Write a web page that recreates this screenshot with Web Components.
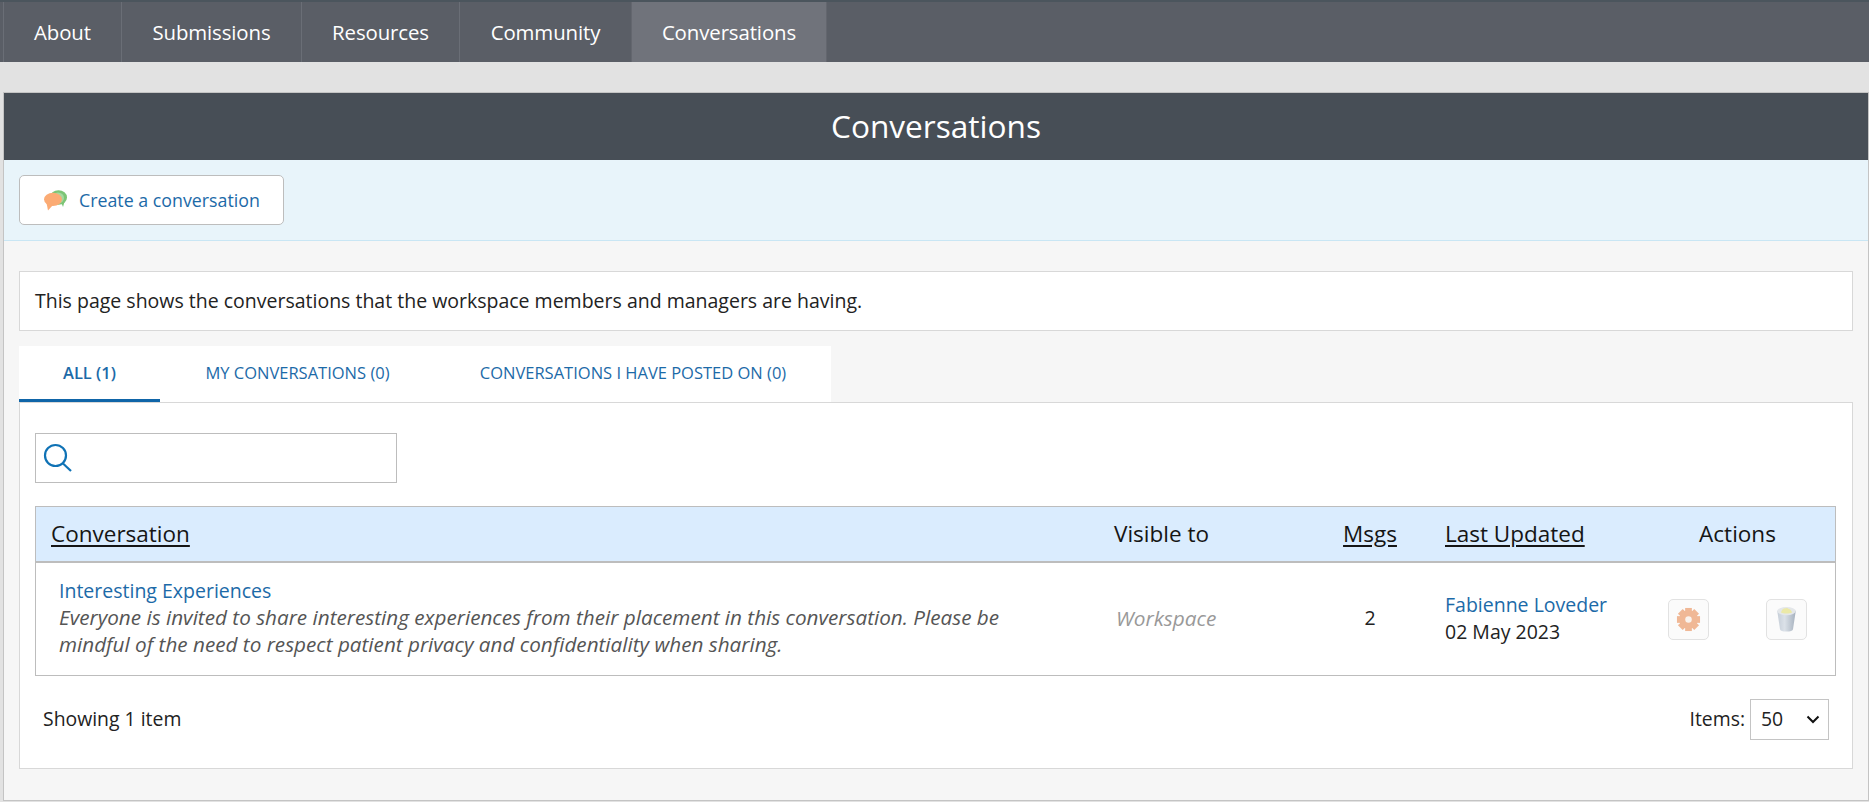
<!DOCTYPE html>
<html lang="en"><head><meta charset="utf-8"><title>Conversations</title>
<style>
html,body{margin:0;padding:0;background:#e2e2e2;font-family:"Open Sans",sans-serif;color:#222;height:802px;overflow:hidden}
</style></head><body>
<app-nav>
  <nav-item style="--w:118px">About</nav-item>
  <nav-item style="--w:180px">Submissions</nav-item>
  <nav-item style="--w:158px">Resources</nav-item>
  <nav-item style="--w:172px">Community</nav-item>
  <nav-item active style="--w:196px">Conversations</nav-item>
</app-nav>
<page-panel heading="Conversations">
  <action-bar><chat-button>Create a conversation</chat-button></action-bar>
  <panel-body>
    <intro-box>This page shows the conversations that the workspace members and managers are having.</intro-box>
    <tab-strip>
      <tab-item active style="--w:141px">ALL (1)</tab-item>
      <tab-item style="--w:275px">MY CONVERSATIONS (0)</tab-item>
      <tab-item style="--w:396px">CONVERSATIONS I HAVE POSTED ON (0)</tab-item>
    </tab-strip>
    <tab-panel>
      <search-box></search-box>
      <conversation-table></conversation-table>
      <list-footer></list-footer>
    </tab-panel>
  </panel-body>
</page-panel>
<script>
function def(name, css, html){
  customElements.define(name, class extends HTMLElement{
    constructor(){super();const r=this.attachShadow({mode:'open'});
      r.innerHTML='<style>'+css+'</style>'+(typeof html==='function'?html(this):html);}
  });
}
const BLUE='#1c6aa8';
def('app-nav',`:host{display:flex;height:60px;padding:2px 0 0 3px;background:#5a5e66;box-shadow:inset 0 2px 0 #4b555d}`,`<slot></slot>`);
def('nav-item',`:host{display:flex;align-items:center;justify-content:center;box-sizing:border-box;width:var(--w);height:60px;color:#fff;font-size:20.4px;border-left:1px solid #6a6e76;letter-spacing:-.1px}
:host([active]){background:#70737b;border-left-color:#63666e;border-right:1px solid #63666e}`,`<slot></slot>`);
def('page-panel',`:host{display:block;box-sizing:border-box;margin:30px 0 0 3px;width:1866px;height:709px;background:#f6f6f6;border:1px solid #c4c4c4}
h1{margin:0;box-sizing:border-box;height:67px;padding-bottom:2px;background:#474e56;color:#fff;font-size:31.6px;font-weight:400;display:flex;align-items:center;justify-content:center}`,
 h=>`<h1>${h.getAttribute('heading')}</h1><slot></slot>`);
def('action-bar',`:host{display:block;box-sizing:border-box;height:81px;padding:15px;background:#e8f4fa;border-bottom:1px solid #c9e6f4}`,`<slot></slot>`);
def('chat-button',`:host{display:inline-flex;align-items:center;box-sizing:border-box;width:265px;height:50px;padding-left:24px;gap:12px;background:#fff;border:1px solid #bdbdbd;border-radius:5px;color:${BLUE};font-size:17.8px}
svg{flex:none}`,`<svg width="23" height="21" viewBox="0 0 23 21"><ellipse cx="14.500" cy="7.500" rx="8.500" ry="7.300" fill="#7cc576"/><path d="M17 12l2 5 2-7z" fill="#7cc576"/><ellipse cx="14" cy="8" rx="6" ry="5.600" fill="#b5e0b0" opacity=".7"/><ellipse cx="9" cy="9.300" rx="9" ry="6.600" fill="#fbab74"/><path d="M2.500 13l1.500 7.500 5-5.500z" fill="#fbab74"/></svg><slot></slot>`);
def('panel-body',`:host{display:block;padding:30px 15px 0 15px}`,`<slot></slot>`);
def('intro-box',`:host{display:flex;align-items:center;box-sizing:border-box;height:60px;padding:0 15px 1px;background:#fff;border:1px solid #d8d8d8;font-size:19.5px;color:#222;margin-bottom:15px}`,`<slot></slot>`);
def('tab-strip',`:host{display:flex;width:812px;height:56px;background:#fff}`,`<slot></slot>`);
def('tab-item',`:host{display:flex;align-items:center;justify-content:center;box-sizing:border-box;width:var(--w);height:56px;color:${BLUE};font-size:16.5px;padding-bottom:3px}
:host([active]){font-weight:600;border-bottom:3px solid #0f65a8;padding-bottom:0}`,`<slot></slot>`);
def('tab-panel',`:host{display:block;box-sizing:border-box;height:367px;padding:30px 15px 0;background:#fff;border:1px solid #d8d8d8}`,`<slot></slot>`);
def('search-box',`:host{display:flex;align-items:center;box-sizing:border-box;width:362px;height:50px;padding-left:7px;border:1px solid #bdbdbd;background:#fff}
input{border:0;outline:0;flex:1;min-width:0;background:transparent;margin-left:6px;font:18px "Open Sans",sans-serif}`,
`<svg width="30" height="30" viewBox="0 0 30 30"><circle cx="12.500" cy="12.500" r="10.500" fill="none" stroke="#0f72b5" stroke-width="2.200"/><path d="M20 20.500l8 7.500" stroke="#0f72b5" stroke-width="2.200" fill="none"/></svg><input aria-label="Search">`);
const gear=`<svg width="25" height="25" viewBox="0 0 26 26" style="filter:blur(.6px)"><g fill="#f0b896"><circle cx="13" cy="13" r="9.500"/>${[0,45,90,135,180,225,270,315].map(a=>`<rect x="9.500" y="1" width="7" height="6" transform="rotate(${a} 13 13)"/>`).join('')}</g><circle cx="13" cy="13" r="3.400" fill="#faf3ee"/></svg>`;
const trash=`<svg width="21" height="26" viewBox="0 0 22 28" style="filter:blur(.4px)"><defs><linearGradient id="t" x1="0" x2="1" y1="0" y2="0"><stop offset="0" stop-color="#c6ced8"/><stop offset=".4" stop-color="#dbe1e8"/><stop offset="1" stop-color="#a6b1be"/></linearGradient></defs><path d="M1 5l3 20c.2 1.500 3 2.500 7 2.500s6.800-1 7-2.500l3-20z" fill="url(#t)"/><ellipse cx="11" cy="5.500" rx="10" ry="4.500" fill="#e4e7ea"/><path d="M5 7c1-3.500 3-5 5.500-4.500.8-.8 2-.5 2.500.5 2 .2 3.500 2 4 4-3 1.400-9 1.400-12 0z" fill="#ebe9a8"/></svg>`;
def('conversation-table',`:host{display:block;box-sizing:border-box;width:1801px;height:170px;border:1px solid #bdbdbd;margin-top:23px;font-size:19.5px}
.row{display:grid;grid-template-columns:1063px 231px 80px 20px 210px 195px;align-items:center}
.head{box-sizing:border-box;height:56px;padding-bottom:2px;background:#daecfe;border-bottom:2px solid #bdbdbd;font-size:22.5px;font-weight:500;color:#151515}
.body{box-sizing:border-box;height:112px;color:#222}
.head>*{white-space:nowrap}
.c1{padding-left:15px}.c2{padding-left:15px}.c3{text-align:center;margin-bottom:3px}.c5{padding-left:15px}.c6{text-align:center}
.head .c3{margin-bottom:0}
u{text-decoration-thickness:2px;text-underline-offset:3px}
.conv{padding-left:23px;line-height:27px;padding-right:85px;margin-bottom:3px}
a{color:${BLUE};text-decoration:none}
em{color:#555;display:block;font-size:20.7px}
.vis{color:#999;font-style:italic;padding-left:17px;font-size:20.8px;margin-bottom:3px}
.upd{line-height:27px;padding-left:15px;margin-bottom:3px}
.acts{display:flex;justify-content:space-between;padding:0 28px}
.acts span{display:flex;align-items:center;justify-content:center;box-sizing:border-box;width:41px;height:41px;border:1px solid #e2e2e2;border-radius:5px;background:#fbfbfb}`,
`<div class="row head"><div class="c1"><u>Conversation</u></div><div class="c2">Visible to</div><div class="c3"><u>Msgs</u></div><div></div><div class="c5"><u>Last Updated</u></div><div class="c6">Actions</div></div>
<div class="row body"><div class="conv"><a>Interesting Experiences</a><em>Everyone is invited to share interesting experiences from their placement in this conversation. Please be mindful of the need to respect patient privacy and confidentiality when sharing.</em></div><div class="vis">Workspace</div><div class="c3">2</div><div></div><div class="upd"><a>Fabienne Loveder</a><br>02 May 2023</div><div class="acts"><span>${gear}</span><span>${trash}</span></div></div>`);
def('list-footer',`:host{display:flex;align-items:center;justify-content:space-between;width:1801px;box-sizing:border-box;height:86px;padding:0 7px 0 8px;font-size:19.4px;color:#222}
.t{margin-bottom:2px}
.r{display:flex;align-items:center;gap:5px;color:#222}
.s{position:relative;display:block;width:79px;height:41px}
select{appearance:none;-webkit-appearance:none;box-sizing:border-box;width:100%;height:100%;padding:0 0 2px 10px;border:1px solid #c4c4c4;border-radius:0;background:#fff;font:19.4px "Open Sans",sans-serif;color:#222;outline:0}
svg{position:absolute;right:9px;top:16px;pointer-events:none}`,
`<div class="t">Showing 1 item</div><div class="r"><span class="t">Items:</span><span class="s"><select aria-label="Items"><option>50</option></select><svg width="14" height="9" viewBox="0 0 14 9"><path d="M1.500 1.500L7 7l5.500-5.500" fill="none" stroke="#111" stroke-width="2"/></svg></span></div>`);
</script>
</body></html>
